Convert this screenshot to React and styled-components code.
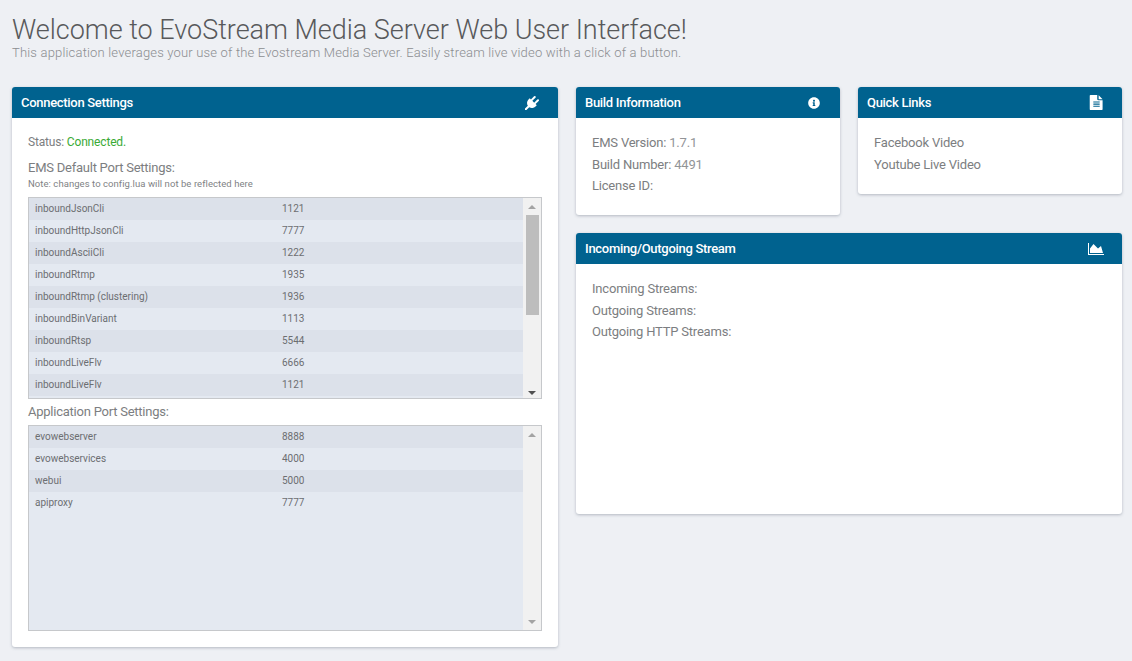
import React from "react";
import styled, { createGlobalStyle } from "styled-components";
import { FaInfoCircle } from "react-icons/fa";

const Global = createGlobalStyle`
  html, body { margin: 0; padding: 0; background: #eef0f4; }
  body { font-family: Roboto, "Liberation Sans", sans-serif; color: #76787b; }
`;
const Page = styled.div`
  width: 1132px; height: 661px; box-sizing: border-box; overflow: hidden;
  padding: 15px 10px 0 12px;
`;
const Title = styled.h1`
  margin: 0; font-size: 27px; line-height: 30px; font-weight: 300; color: #58595b; letter-spacing: -0.02px;
`;
const Subtitle = styled.p`
  margin: 0 0 26px; font-size: 13px; line-height: 16px; font-weight: 300; color: #8b8d90; letter-spacing: 0.18px;
`;
const Columns = styled.div`
  display: grid; grid-template-columns: 546px 546px; column-gap: 18px; align-items: start;
`;
const RightColumn = styled.div`
  display: flex; flex-direction: column; gap: 18px; align-items: stretch;
`;
const TopRow = styled.div`
  display: grid; grid-template-columns: 264px 264px; column-gap: 18px; align-items: start;
`;
const Card = styled.section`
  height: ${(p) => p.$height}px; background: #fff; border-radius: 3px; overflow: hidden;
  box-shadow: 0 1px 3px rgba(70, 80, 100, 0.35); display: flex; flex-direction: column;
`;
const CardHeader = styled.header`
  height: 31px; flex: none; background: #00628f; color: #fff; display: flex;
  align-items: center; justify-content: space-between; padding: 0 18px 0 9px;
  font-size: 13px; font-weight: 500; letter-spacing: -0.3px;
`;
const IconSlot = styled.span`
  width: 16px; display: flex; justify-content: center; font-size: ${(p) => p.$size || 13}px;
  svg { display: block; }
`;
const CardBody = styled.div`
  padding: ${(p) => p.$top || 14}px 16px 0; display: flex; flex-direction: column;
`;
const Line = styled.div`
  font-size: 13px; line-height: 21.5px; color: #7c7e81; letter-spacing: -0.2px;
`;
const Value = styled.span`color: #929497;`;
const Status = styled.div`
  font-size: 12px; line-height: 16px; color: #7c7e81; margin-bottom: 10px; letter-spacing: -0.17px;
`;
const Connected = styled.span`color: #3aaa35;`;
const SectionLabel = styled.div`
  font-size: 13px; line-height: 16px; color: #7c7e81; letter-spacing: -0.24px;
  margin-bottom: ${(p) => p.$gap || 0}px;
`;
const Note = styled.div`
  font-size: 9.5px; line-height: 11px; color: #808285; letter-spacing: 0.06px; margin: 2px 0 8px;
`;
const ListBox = styled.div`
  height: ${(p) => p.$height}px; box-sizing: border-box; border: 1px solid #c6c8cb; display: flex;
  background: #e4e9f1; margin-bottom: ${(p) => p.$gap || 0}px;
`;
const Rows = styled.div`
  flex: 1; overflow: hidden; min-width: 0;
`;
const Row = styled.div`
  height: 22px; box-sizing: border-box; padding: 0 0 2px 6px; display: grid; grid-template-columns: 247px 1fr; align-items: center;
  font-size: 10px; color: #6c6e71;
  background: ${(p) => (p.$odd ? "#dce1ea" : "#e4e9f1")};
`;
const Scrollbar = styled.div`
  width: 18px; flex: none; background: #f1f1f1; display: flex; flex-direction: column; align-items: center;
  padding: 7px 0 ${(p) => p.$bottom}px; box-sizing: border-box;
`;
const Arrow = styled.span`
  width: 0; height: 0; border-left: 4px solid transparent; border-right: 4px solid transparent;
  ${(p) => (p.$down ? `border-top: 4px solid ${p.$color};` : `border-bottom: 4px solid ${p.$color};`)}
`;
const Thumb = styled.div`
  width: 13px; height: 100px; background: #bdbdbd; margin-top: 6px;
`;
const Spacer = styled.div`flex: 1;`;

const PlugIcon = () => (
  <svg width="14" height="14" viewBox="0 0 1792 1792" fill="currentColor">
    <path d="M1755 453q37 38 37 90.5t-37 90.5l-401 400 150 150-160 160q-163 163-389.5 186.5t-411.5-100.5l-362 362h-181v-181l362-362q-124-185-100.5-411.5t186.5-389.5l160-160 150 150 400-401q38-37 91-37t90 37 37 90.5-37 90.5l-400 401 234 234 401-400q38-37 91-37t90 37z" />
  </svg>
);
const FileIcon = () => (
  <svg width="15" height="15" viewBox="0 0 1792 1792" fill="currentColor">
    <path d="M1596 476q14 14 28 36h-472v-472q22 14 36 28zm-476 164h504v1056q0 40-28 68t-68 28h-1344q-40 0-68-28t-28-68v-1600q0-40 28-68t68-28h800v504q0 40 28 68t68 28zm160 736v-64q0-14-9-23t-23-9h-704q-14 0-23 9t-9 23v64q0 14 9 23t23 9h704q14 0 23-9t9-23zm0-256v-64q0-14-9-23t-23-9h-704q-14 0-23 9t-9 23v64q0 14 9 23t23 9h704q14 0 23-9t9-23zm0-256v-64q0-14-9-23t-23-9h-704q-14 0-23 9t-9 23v64q0 14 9 23t23 9h704q14 0 23-9t9-23z" />
  </svg>
);
const AreaChartIcon = () => (
  <svg width="16" height="14" viewBox="0 0 2048 1792" fill="currentColor">
    <path d="M2048 1536v128h-2048v-1536h128v1408h1920zm-384-1024l256 896h-1664v-576l448-576 576 576z" />
  </svg>
);

const ems = [["inboundJsonCli",1121],["inboundHttpJsonCli",7777],["inboundAsciiCli",1222],["inboundRtmp",1935],["inboundRtmp (clustering)",1936],["inboundBinVariant",1113],["inboundRtsp",5544],["inboundLiveFlv",6666],["inboundLiveFlv",1121]];
const apps = [["evowebserver",8888],["evowebservices",4000],["webui",5000],["apiproxy",7777]];

function PortList({ items, height, gap, thumb }) {
  return (
    <ListBox $height={height} $gap={gap}>
      <Rows>
        {items.map(([name, port], i) => (
          <Row key={i} $odd={i % 2 === 0}><span>{name}</span><span>{port}</span></Row>
        ))}
      </Rows>
      <Scrollbar $bottom={thumb ? 3 : 6}>
        <Arrow $color="#a3a3a3" />
        {thumb && <Thumb />}
        <Spacer />
        <Arrow $down $color={thumb ? "#505050" : "#a3a3a3"} />
      </Scrollbar>
    </ListBox>
  );
}

export default function App() {
  return (
    <Page>
      <Global />
      <Title>Welcome to EvoStream Media Server Web User Interface!</Title>
      <Subtitle>This application leverages your use of the Evostream Media Server. Easily stream live video with a click of a button.</Subtitle>
      <Columns>
        <Card $height={560}>
          <CardHeader>Connection Settings<IconSlot><PlugIcon /></IconSlot></CardHeader>
          <CardBody $top={16}>
            <Status>Status: <Connected>Connected.</Connected></Status>
            <SectionLabel>EMS Default Port Settings:</SectionLabel>
            <Note>Note: changes to config.lua will not be reflected here</Note>
            <PortList items={ems} height={202} gap={5} thumb />
            <SectionLabel $gap={5}>Application Port Settings:</SectionLabel>
            <PortList items={apps} height={206} />
          </CardBody>
        </Card>
        <RightColumn>
          <TopRow>
            <Card $height={128}>
              <CardHeader>Build Information<IconSlot $size={12}><FaInfoCircle /></IconSlot></CardHeader>
              <CardBody>
                <Line>EMS Version: <Value>1.7.1</Value></Line>
                <Line>Build Number: <Value>4491</Value></Line>
                <Line>License ID:</Line>
              </CardBody>
            </Card>
            <Card $height={107}>
              <CardHeader>Quick Links<IconSlot><FileIcon /></IconSlot></CardHeader>
              <CardBody>
                <Line>Facebook Video</Line>
                <Line>Youtube Live Video</Line>
              </CardBody>
            </Card>
          </TopRow>
          <Card $height={281}>
            <CardHeader>Incoming/Outgoing Stream<IconSlot><AreaChartIcon /></IconSlot></CardHeader>
            <CardBody>
              <Line>Incoming Streams:</Line>
              <Line>Outgoing Streams:</Line>
              <Line>Outgoing HTTP Streams:</Line>
            </CardBody>
          </Card>
        </RightColumn>
      </Columns>
    </Page>
  );
}
